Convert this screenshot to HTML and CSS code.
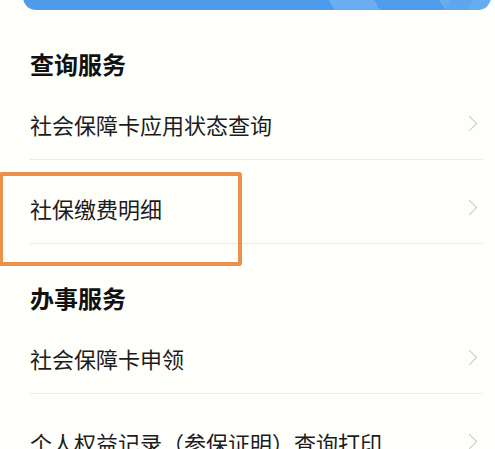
FILE: index.html
```html
<!DOCTYPE html>
<html lang="zh-CN">
<head>
  <meta charset="UTF-8" />
  <title>社保服务</title>
  <link rel="stylesheet" href="styles.css">
</head>
<body>

  <div class="page">
    <!-- 顶部卡片（只露出底部） -->
    <div class="banner"></div>

    <!-- 查询服务 -->
    <h2 class="group-title">查询服务</h2>
    <ul class="menu">
      <li class="menu-item">社会保障卡应用状态查询<span class="arrow"></span></li>
      <li class="menu-item">社保缴费明细<span class="arrow"></span></li>
    </ul>

    <!-- 办事服务 -->
    <h2 class="group-title">办事服务</h2>
    <ul class="menu">
      <li class="menu-item">社会保障卡申领<span class="arrow"></span></li>
      <li class="menu-item">个人权益记录（参保证明）查询打印<span class="arrow"></span></li>
    </ul>

    <!-- 标注框 -->
    <div class="mark"></div>
  </div>

</body>
</html>
```

FILE: styles.css
```css
/* 基础 */
body {
  margin: 0;
  background: #fefefa;
  font-family: "Noto Sans CJK SC", "Noto Sans", sans-serif;
  color: #1c1c1c;
  overflow: hidden;
}

.page {
  position: relative;
  display: flow-root;
  width: 495px;
}

/* 顶部蓝色卡片 */
.banner {
  height: 60px;
  margin: -50px 4px 0 23px;
  border-radius: 0 0 13px 13px;
  background:
    linear-gradient(120deg, transparent 0 calc(100% - 40px), #5ea6ee calc(100% - 40px) calc(100% - 20px), transparent calc(100% - 20px)),
    linear-gradient(60deg, transparent 0 62%, #6aaef1 62% 71%, #4f9ceb 71% 84%, #68acf0 84% 94%, transparent 94%),
    #4e9bea;
}

/* 分组标题 */
.group-title {
  margin: 0;
  padding: 42px 0 0 30px;
  font-size: 24px;
  line-height: 24px;
  font-weight: 700;
  color: #111;
}

/* 列表 */
.menu {
  list-style: none;
  margin: 0;
  padding: 0 12px 0 30px;
}

.menu-item {
  display: flex;
  justify-content: space-between;
  align-items: center;
  box-sizing: border-box;
  height: 84px;
  padding-top: 12px;
  border-bottom: 1px solid #ebebe8;
  font-size: 22px;
  line-height: 24px;
}

/* 右箭头 */
.arrow {
  width: 10px;
  height: 10px;
  margin-right: 8px;
  border-top: 1.5px solid #c8c8c8;
  border-right: 1.5px solid #c8c8c8;
  transform: rotate(45deg);
}

/* 橙色标注框 */
.mark {
  position: absolute;
  left: -1px;
  top: 172px;
  width: 235px;
  height: 86px;
  border: 4px solid #ec8f48;
  border-radius: 3px;
}
```
